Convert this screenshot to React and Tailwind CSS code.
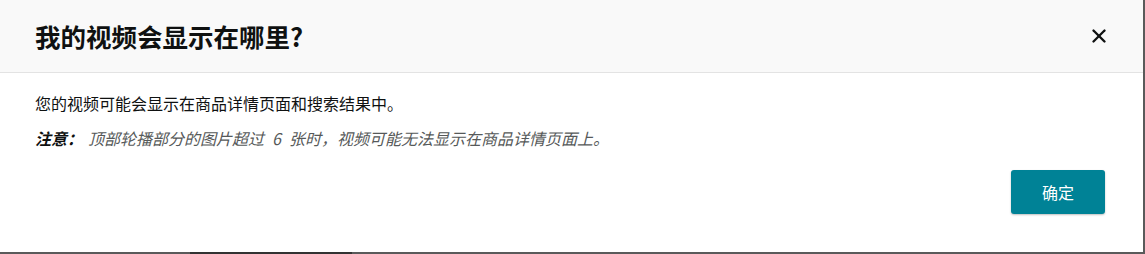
import { X } from 'lucide-react'

export default function App() {
  return (
    <div
      className="w-[1145px] h-[254px] flex flex-col bg-white overflow-hidden"
      style={{ fontFamily: '"Noto Sans CJK SC", "Noto Sans", sans-serif' }}
    >
      <div className="flex flex-1">
        {/* Modal */}
        <div className="flex-1 flex flex-col">
          <div className="h-[73px] flex items-center justify-between pl-[35px] pr-[33px] bg-[#f9f9f9] border-b border-[#e3e3e3]">
            <h2 className="text-[25.5px] font-bold text-[#0f1111] leading-none">我的视频会显示在哪里?</h2>
            <button className="text-[#0f1111]">
              <X size={22} strokeWidth={2.6} />
            </button>
          </div>

          <div className="flex-1 flex flex-col px-[35px] pt-[18px]">
            <p className="text-[16px] leading-[24px] text-[#0f1111]">
              您的视频可能会显示在商品详情页面和搜索结果中。
            </p>
            <p className="mt-[11px] text-[16px] leading-[24px] italic text-[#565959]">
              <span className="inline-block w-[53px] font-bold text-[#0f1111]">注意：</span>
              顶部轮播部分的图片超过{'\u2002'}6{'\u2002'}张时，视频可能无法显示在商品详情页面上。
            </p>
            <div className="flex justify-end mt-[20px] pr-[3px]">
              <button className="w-[94px] h-[44px] rounded-[3px] bg-[#008296] text-white text-[16px] shadow-[0_1px_2px_rgba(0,0,0,0.25)]">
                确定
              </button>
            </div>
          </div>
        </div>
        <div className="w-[2px] bg-[#5a5a5a]" />
      </div>

      {/* page edge below the modal */}
      <div className="h-[2px] flex">
        <div className="w-[190px] bg-[#5a5a5a]" />
        <div className="w-[162px] bg-[#333333]" />
        <div className="flex-1 bg-[#5a5a5a]" />
      </div>
    </div>
  )
}
